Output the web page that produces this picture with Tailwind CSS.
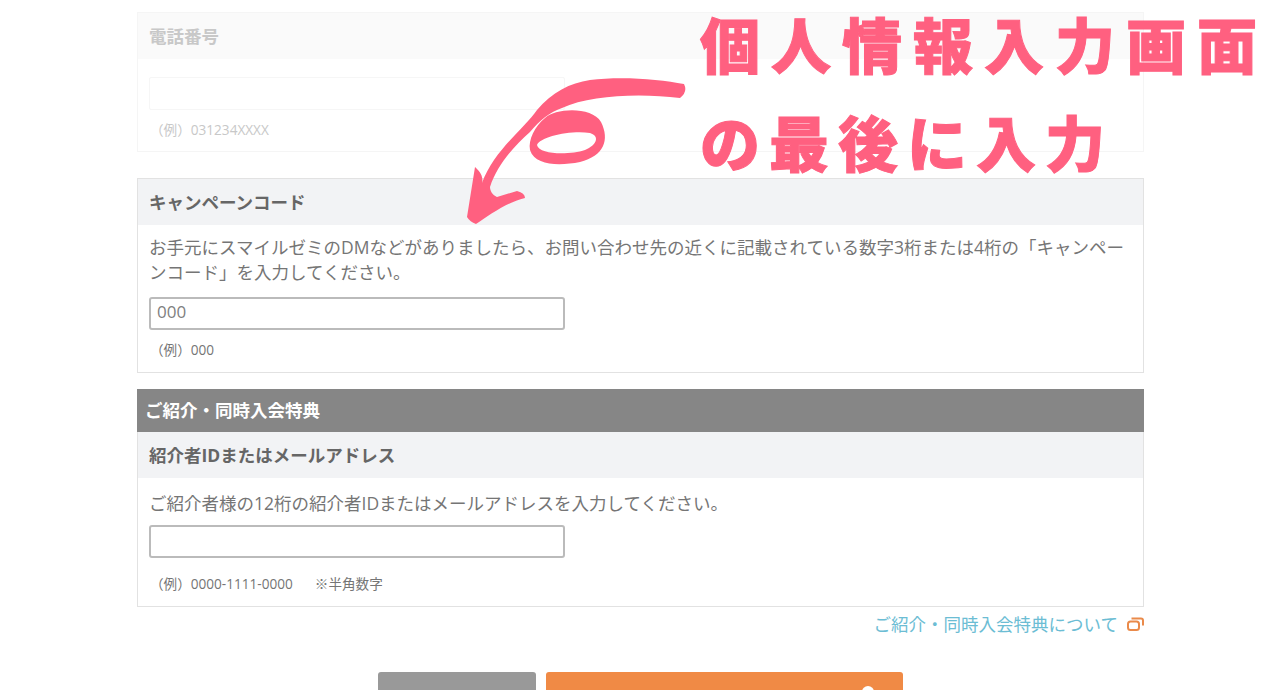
<!DOCTYPE html>
<html lang="ja">
<head>
    <meta charset="UTF-8">
    <title>個人情報入力画面</title>
    <script src="https://cdn.jsdelivr.net/npm/@tailwindcss/browser@4"></script>
</head>
<body class="bg-white h-[690px] overflow-hidden font-['Open_Sans','Noto_Sans_CJK_JP',sans-serif] text-[#757575]">
    <div class="relative h-[690px] overflow-hidden">
        <main class="w-[1007px] ml-[137px] pt-[12px]">

            <!-- Phone number (faded) -->
            <section class="border border-[#f5f5f5] h-[140px] text-[#c8c8c8]">
                <h3 class="h-[46px] bg-[#fafafa] px-[11px] flex items-center text-[17.5px] font-bold">電話番号</h3>
                <div class="px-[11px] pt-[18px]">
                    <div class="w-[416px] h-[33px] border border-[#f6f6f6] rounded-[2px]"></div>
                    <p class="pl-px mt-[11px] text-[13.6px] leading-[18px]">（例）031234XXXX</p>
                </div>
            </section>

            <!-- Campaign code -->
            <section class="mt-[26px] border border-[#e2e2e2] h-[195px]">
                <h3 class="h-[46px] bg-[#f2f3f5] px-[11px] flex items-center text-[17.5px] font-bold text-[#666]">キャンペーンコード</h3>
                <div class="px-[11px] pt-[10px]">
                    <p class="text-[17.5px] leading-[25px] w-[985px]">お手元にスマイルゼミのDMなどがありましたら、お問い合わせ先の近くに記載されている数字3桁または4桁の「キャンペーンコード」を入力してください。</p>
                    <div class="mt-[12px] w-[416px] h-[33px] border-2 border-[#bbb] rounded-[3px] px-[6px] pb-[4px] flex items-center text-[17px] text-[#808080]">000</div>
                    <p class="pl-px mt-[11px] text-[13.6px] leading-[18px]">（例）000</p>
                </div>
            </section>

            <!-- Referral -->
            <section class="mt-[16px] border border-[#e2e2e2] h-[218px]">
                <h2 class="h-[43px] -mx-px -mt-px bg-[#868686] px-[8px] flex items-center text-[17.5px] font-bold text-white">ご紹介・同時入会特典</h2>
                <h3 class="h-[46px] bg-[#f2f3f5] px-[11px] flex items-center text-[17.5px] font-bold text-[#666]">紹介者IDまたはメールアドレス</h3>
                <div class="px-[11px] pt-[13px]">
                    <p class="text-[17.5px] leading-[25px]">ご紹介者様の12桁の紹介者IDまたはメールアドレスを入力してください。</p>
                    <div class="mt-[9px] w-[416px] h-[33px] border-2 border-[#bbb] rounded-[3px]"></div>
                    <p class="pl-px mt-[17px] text-[13.6px] leading-[18px] flex gap-[22px]"><span>（例）0000-1111-0000</span><span>※半角数字</span></p>
                </div>
            </section>

            <a href="#" class="mt-[6px] h-[22px] flex items-center justify-end gap-[9px] text-[17.5px] text-[#6cbdd4]">
                ご紹介・同時入会特典について
                <svg class="w-[17px] h-[14px]" viewBox="0 0 17 14" fill="none" stroke="#ea8a4a" stroke-width="2">
                    <rect x="1" y="4.5" width="11" height="8.5" rx="2.5"></rect>
                    <path d="M4.5 1.5h9.5a2 2 0 0 1 2 2v5"></path>
                </svg>
            </a>

            <div class="mt-[37px] ml-[241px] flex gap-[10px]">
                <div class="w-[158px] h-[40px] bg-[#999] rounded-[3px]"></div>
                <div class="relative w-[357px] h-[40px] bg-[#f08a45] rounded-[3px]">
                    <span class="absolute left-[316px] top-[14px] w-[12px] h-[12px] rounded-full bg-white"></span>
                </div>
            </div>
        </main>

        <!-- Pink annotation over the page -->
        <div class="absolute left-[700px] top-[7px] text-[#ff6080] font-black text-[60px] leading-[72px] tracking-[11px] whitespace-nowrap [-webkit-text-stroke:1px_#ff6080] font-['Noto_Sans_CJK_JP',sans-serif]">個人情報入力画面</div>
        <div class="absolute left-[700px] top-[105px] text-[#ff6080] font-black text-[60px] leading-[72px] tracking-[9px] whitespace-nowrap [-webkit-text-stroke:1px_#ff6080] font-['Noto_Sans_CJK_JP',sans-serif]">の最後に入力</div>
        <svg class="absolute left-0 top-0" width="1280" height="690" viewBox="0 0 1280 690" fill="#ff6080">
            <path d="M684 84 C660 79 620 76 590 80 C570 83 552 92 537 110 C525 128 494 150 482 183 C484 175 478 170 475 167 L467 217 Q470 222 476 224 C490 215 505 203 525 198 Q525 193 517 191 L497 197 C492 195 490 190 490 187 C497 165 515 145 530 132 C540 120 550 112 562 108 C590 95 640 93 680 98 Q688 92 684 84 Z"></path>
            <path fill-rule="evenodd" d="M545 118 C555 108 592 106 601 122 C610 140 604 156 580 162 C560 166 535 166 530 150 C528 140 535 126 545 118 Z M537 145 C540 137 570 130 590 133 C600 136 597 145 585 150 C570 155 539 155 537 145 Z"></path>
        </svg>
    </div>
</body>
</html>
